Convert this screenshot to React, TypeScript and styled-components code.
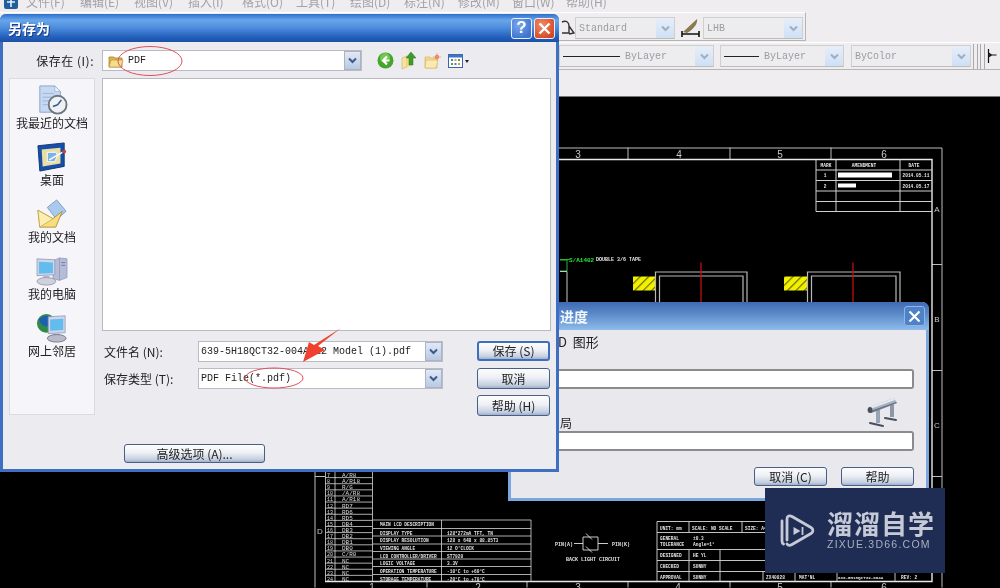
import React from "react";
import styled, { createGlobalStyle } from "styled-components";

const Global = createGlobalStyle`
  html, body { margin: 0; padding: 0; background: #000; overflow: hidden; }
  * { box-sizing: border-box; }
`;

const CJK = `"Noto Sans CJK SC", "Liberation Sans", sans-serif`;
const MONO = `"Liberation Mono", "Noto Sans CJK SC", monospace`;

const Desktop = styled.div`
  position: relative;
  width: 1000px;
  height: 588px;
  overflow: hidden;
  background: #000;
  display: flex;
  flex-direction: column;
  font-family: ${CJK};
  font-size: 12px;
  color: #222;
  filter: blur(0.3px);
`;

/* ---------- CAD chrome ---------- */
const Chrome = styled.div`
  height: 97px;
  flex: none;
  background: #efedf0;
  border-bottom: 1px solid #777;
  overflow: hidden;
`;
const MenuBar = styled.div`
  height: 12px;
  display: flex;
  align-items: center;
  padding-left: 2px;
  overflow: hidden;
`;
const AppIcon = styled.svg`
  width: 18px;
  height: 16px;
  margin-top: -7px;
  margin-right: 6px;
  flex: none;
`;
const MenuItem = styled.span`
  width: 54px;
  flex: none;
  margin-top: -9px;
  color: #a2a1a6;
  font-size: 12px;
  line-height: 15px;
  white-space: nowrap;
`;
const ToolRow = styled.div<{ $left: number; $end?: number; $top: number; $h: number; $pt?: number }>`
  display: flex;
  align-items: center;
  margin-top: ${(p) => p.$top}px;
  height: ${(p) => p.$h}px;
  padding-left: ${(p) => p.$left}px;
  padding-top: ${(p) => p.$pt ?? 0}px;
  width: ${(p) => p.$end ?? 1000}px;
  border-top: 1px solid #fff;
  border-bottom: 1px solid #b5b4b6;
  border-right: ${(p) => (p.$end ? "1px solid #b5b4b6" : "none")};
`;
const ToolCombo = styled.div<{ $w: number; $mr?: number }>`
  width: ${(p) => p.$w}px;
  height: 22px;
  flex: none;
  margin-right: ${(p) => p.$mr ?? 0}px;
  display: flex;
  align-items: center;
  background: #edecee;
  border: 1px solid #d0cfcb;
  border-bottom-color: #bdbcb9;
  padding-left: 3px;
  color: #9c9ba0;
  font-family: ${MONO};
  font-size: 10px;
`;
const ComboValue = styled.span`
  flex: 1;
  min-width: 0;
  display: flex;
  align-items: center;
  white-space: nowrap;
`;
const LineSample = styled.i<{ $w: number }>`
  width: ${(p) => p.$w}px;
  height: 1px;
  background: #222;
  margin-right: 5px;
  flex: none;
`;
const ToolArrow = styled.span`
  width: 18px;
  height: 20px;
  flex: none;
  display: flex;
  align-items: center;
  justify-content: center;
  background: linear-gradient(#e6eefa, #cfe0f4);
`;
const ToolGlyph = styled.svg<{ $w: number }>`
  width: ${(p) => p.$w}px;
  height: 22px;
  flex: none;
`;
const Gripper = styled.div`
  width: 5px;
  height: 25px;
  flex: none;
  margin-left: 2px;
  border-left: 1px solid #a9a8aa;
  border-right: 1px solid #a9a8aa;
`;

/* ---------- drawing area ---------- */
const Canvas = styled.svg`
  display: block;
  flex: 1;
  width: 1000px;
  min-height: 0;
  background: #000;
  filter: blur(0.2px);
`;

/* ---------- windows ---------- */
const SaveWindow = styled.div`
  position: absolute;
  left: 0;
  top: 14px;
  width: 559px;
  height: 458px;
  z-index: 3;
  display: flex;
  flex-direction: column;
  background: #ecebf0;
  border: 3px solid #3f6fc2;
  border-top: none;
  border-radius: 6px 6px 0 0;
`;
const TitleBar = styled.div`
  height: 28px;
  flex: none;
  margin: 0 -3px;
  padding: 0 4px 0 8px;
  border-radius: 6px 6px 0 0;
  display: flex;
  align-items: center;
  justify-content: space-between;
  background: linear-gradient(#2f6fce 0%, #68a6ea 22%, #4c8cdc 50%, #2360bc 82%, #1c50a6 100%);
  color: #fff;
  font-size: 14px;
  font-weight: 700;
  text-shadow: 1px 1px 0 #1b3d80;
`;
const CaptionButtons = styled.div`
  display: flex;
  gap: 2px;
`;
const CaptionButton = styled.span<{ $red?: boolean }>`
  width: 21px;
  height: 21px;
  display: flex;
  align-items: center;
  justify-content: center;
  border: 1px solid #e8eefa;
  border-radius: 3px;
  color: #fff;
  font-family: "Liberation Sans", sans-serif;
  font-size: 17px;
  font-weight: 700;
  text-shadow: none;
  background: ${(p) =>
    p.$red
      ? "radial-gradient(circle at 35% 30%, #f08a68, #d9512c 70%, #c33f1c)"
      : "radial-gradient(circle at 35% 30%, #7ba8ea, #3f74cf 75%)"};
`;
const SaveBody = styled.div`
  flex: 1;
  padding: 8px 5px 0 6px;
  display: flex;
  flex-direction: column;
`;
const TopRow = styled.div`
  height: 21px;
  flex: none;
  display: flex;
  align-items: center;
`;
const TopLabel = styled.label`
  width: 93px;
  flex: none;
  padding-right: 8px;
  text-align: right;
  letter-spacing: 0.5px;
  white-space: nowrap;
`;
const Combo = styled.div<{ $w: number }>`
  width: ${(p) => p.$w}px;
  height: 21px;
  flex: none;
  display: flex;
  align-items: center;
  background: #fff;
  border: 1px solid #b9bcc4;
  padding-left: 2px;
  font-family: ${MONO};
  font-size: 10px;
  color: #222;
  white-space: nowrap;
`;
const ComboText = styled.span`
  flex: 1;
  min-width: 0;
  display: flex;
  align-items: center;
  gap: 4px;
`;
const ArrowButton = styled.span`
  width: 17px;
  height: 19px;
  flex: none;
  display: flex;
  align-items: center;
  justify-content: center;
  border: 1px solid #a9b4c8;
  background: linear-gradient(#e2e9f6, #b9c9e2);
`;
const NavIcons = styled.div`
  display: flex;
  align-items: center;
  gap: 7px;
  margin-left: 15px;
`;
const MainGrid = styled.div`
  margin-top: 7px;
  display: grid;
  grid-template-columns: 86px 1fr;
  column-gap: 7px;
`;
const PlacesBar = styled.div`
  height: 337px;
  padding-top: 6px;
  background: #f6f5f9;
  border: 1px solid #dcdbe0;
  display: flex;
  flex-direction: column;
`;
const Place = styled.div`
  height: 57px;
  flex: none;
  display: flex;
  flex-direction: column;
  align-items: center;
  white-space: nowrap;
  line-height: 16px;
  svg { flex: none; width: 34px; height: 30px; }
`;
const FileColumn = styled.div`
  display: flex;
  flex-direction: column;
`;
const FileList = styled.div`
  height: 253px;
  background: #fff;
  border: 1px solid #b9bac0;
`;
const FormGrid = styled.div`
  margin-top: 10px;
  display: grid;
  grid-template-columns: 96px 245px 73px;
  grid-template-rows: 21px 21px 21px;
  column-gap: 0;
  row-gap: 6px;
  align-items: start;
`;
const FormLabel = styled.label`
  padding-left: 2px;
  line-height: 21px;
  white-space: nowrap;
`;
const FormButtonCell = styled.div`
  margin-left: 34px;
  width: 73px;
`;
const XpButton = styled.button<{ $w?: number; $default?: boolean; $h?: number }>`
  width: ${(p) => p.$w ?? 73}px;
  height: ${(p) => p.$h ?? 20}px;
  padding: 0;
  display: block;
  border: ${(p) => (p.$default ? "2px solid #3f6fb8" : "1px solid #4a5f86")};
  border-radius: 3px;
  background: linear-gradient(#fdfdfe 0%, #eef0f5 45%, #c4cfe0 85%, #9fb0cb 100%);
  color: #222;
  font-family: ${CJK};
  font-size: 12px;
  line-height: 1;
  white-space: nowrap;
`;
const AdvancedRow = styled.div`
  margin-top: 28px;
  margin-left: 115px;
`;

const ProgressWindow = styled.div`
  position: absolute;
  left: 508px;
  top: 302px;
  width: 421px;
  height: 199px;
  z-index: 2;
  background: #e9e8ed;
  border: 3px solid #7ba6de;
  border-top: none;
  border-radius: 7px 7px 0 0;
  display: flex;
  flex-direction: column;
`;
const ProgressTitle = styled.div`
  height: 28px;
  flex: none;
  margin: 0 -3px;
  padding: 0 4px 0 52px;
  border-radius: 7px 7px 0 0;
  display: flex;
  align-items: center;
  justify-content: space-between;
  background: linear-gradient(#3f6ab2 0%, #5d8ccb 45%, #8dbbea 100%);
  color: #f2f7ff;
  font-size: 14px;
  font-weight: 700;
`;
const CloseBox = styled.span`
  width: 21px;
  height: 20px;
  display: flex;
  align-items: center;
  justify-content: center;
  border: 1px solid #8fb4e6;
  border-radius: 3px;
  background: #4f81c9;
`;
const ProgressBody = styled.div`
  flex: 1;
  padding: 3px 12px 0 47px;
  display: flex;
  flex-direction: column;
`;
const ProgressCaption = styled.div`
  height: 17px;
  line-height: 17px;
  font-size: 13px;
  white-space: nowrap;
`;
const ProgressBar = styled.div<{ $top: number }>`
  height: 20px;
  margin-top: ${(p) => p.$top}px;
  flex: none;
  background: #fff;
  border: 2px solid #8b8b8e;
  border-left: none;
  border-radius: 0 3px 3px 0;
`;
const PlotterRow = styled.div`
  height: 34px;
  margin-top: 7px;
  display: flex;
  align-items: flex-end;
  justify-content: space-between;
`;
const ProgressLabel = styled.span`
  font-size: 12px;
  line-height: 16px;
  margin-left: 2px;
  margin-bottom: -1px;
`;
const PlotterIcon = styled.svg`
  width: 34px;
  height: 32px;
  margin-right: 15px;
  margin-bottom: 2px;
  flex: none;
`;
const ProgressActions = styled.div`
  margin-top: 16px;
  display: flex;
  justify-content: flex-end;
  gap: 14px;
`;

/* ---------- overlays ---------- */
const Annotation = styled.svg`
  position: absolute;
  inset: 0;
  width: 1000px;
  height: 588px;
  z-index: 4;
  pointer-events: none;
`;
const Watermark = styled.div`
  position: absolute;
  left: 765px;
  top: 488px;
  width: 180px;
  height: 85px;
  z-index: 5;
  background: #1f2d55;
  display: flex;
  align-items: center;
  padding-left: 14px;
  color: #c6cad6;
`;
const WatermarkLogo = styled.svg`
  width: 38px;
  height: 38px;
  flex: none;
  margin-right: 10px;
`;
const WatermarkText = styled.div`
  display: flex;
  flex-direction: column;
  margin-top: -2px;
`;
const WatermarkName = styled.span`
  font-size: 26px;
  font-weight: 700;
  line-height: 30px;
  letter-spacing: 1px;
  white-space: nowrap;
`;
const WatermarkSite = styled.span`
  font-family: "Liberation Sans", sans-serif;
  font-size: 10.5px;
  line-height: 13px;
  letter-spacing: 1.25px;
  white-space: nowrap;
  color: #a9aebf;
`;
const FolderGlyph = styled.svg`
  width: 16px;
  height: 14px;
  margin-left: 3px;
  flex: none;
`;

/* ---------- icons ---------- */
const Chevron = ({ c = "#3b5a8c" }: { c?: string }) => (
  <svg width="11" height="9" viewBox="0 0 11 9">
    <path d="M2 2.500 5.500 6 9 2.500" fill="none" stroke={c} strokeWidth="2" />
  </svg>
);
const FolderIcon = () => (
  <FolderGlyph viewBox="0 0 16 14">
    <path d="M1 3h5l1 1h7v9H1z" fill="#e2b64e" stroke="#9c7420" strokeWidth=".7" />
    <path d="M3 6h12l-2 7H1z" fill="#f7dd8c" stroke="#b08a30" strokeWidth=".6" />
  </FolderGlyph>
);
const BackIcon = () => (
  <svg width="17" height="17" viewBox="0 0 17 17">
    <circle cx="8.500" cy="8.500" r="8" fill="#45a52c" />
    <circle cx="8" cy="6" r="5" fill="#8ad868" opacity=".65" />
    <path d="M10 4.500 6 8.500l4 4M6 8.500h6.500" fill="none" stroke="#fff" strokeWidth="2.200" />
  </svg>
);
const UpIcon = () => (
  <svg width="16" height="19" viewBox="0 0 16 19">
    <path d="M1 7l5-2v11l-5 2z" fill="#f7e2a0" stroke="#d0b060" strokeWidth=".6" />
    <path d="M6 5h4v10l-4 1z" fill="#f4d880" />
    <path d="M10 1l5 6h-3v7H8V7H5z" fill="#3f9a2c" stroke="#2a7a1c" strokeWidth=".5" />
  </svg>
);
const NewFolderIcon = () => (
  <svg width="17" height="16" viewBox="0 0 17 16">
    <path d="M1 4h5l1 1h6v10H1z" fill="#f4d98c" stroke="#d0ac58" strokeWidth=".6" />
    <path d="M2 7h12l-2 8H1z" fill="#fae9b0" stroke="#d0ac58" strokeWidth=".5" />
    <circle cx="13" cy="4" r="2.200" fill="#ec8050" />
    <path d="M13 0v8M9 4h8" stroke="#ec9a70" strokeWidth=".8" />
  </svg>
);
const ViewsIcon = () => (
  <svg width="22" height="16" viewBox="0 0 22 16">
    <rect x=".5" y="1.500" width="14" height="13" fill="#fff" stroke="#3c64a8" />
    <rect x=".5" y="1.500" width="14" height="3" fill="#3c74c8" />
    <g fill="#4a80c8">
      <rect x="3" y="6" width="2" height="2" />
      <rect x="6.500" y="6" width="2" height="2" fill="#d8a030" />
      <rect x="10" y="6" width="2" height="2" fill="#58a040" />
      <rect x="3" y="10" width="2" height="2" fill="#58a040" />
      <rect x="6.500" y="10" width="2" height="2" />
      <rect x="10" y="10" width="2" height="2" fill="#d8a030" />
    </g>
    <path d="M17 7h4l-2 3z" fill="#222" />
  </svg>
);
const RecentIcon = () => (
  <svg viewBox="0 0 34 32">
    <path d="M4 1h16l6 6v22H4z" fill="#c6d8f2" stroke="#8aa2cc" />
    <path d="M20 1v6h6z" fill="#eef3fb" stroke="#8aa2cc" strokeWidth=".6" />
    <path d="M7 9h12M7 13h10M7 17h8M7 21h7" stroke="#9ab3d8" />
    <circle cx="23" cy="21" r="9.500" fill="#eef1f5" stroke="#70767e" strokeWidth="2" />
    <path d="M23 21l4-5M23 21l-5 2" stroke="#3c5a88" strokeWidth="1.600" />
  </svg>
);
const DesktopIcon = () => (
  <svg viewBox="0 0 34 32">
    <path d="M2 4 30 1v25L4 31z" fill="#174fa8" stroke="#0f3578" />
    <path d="M6 8 26 6v17L7 26z" fill="#e9dfa2" />
    <path d="M12 11h9l2 3-3 7h-8z" fill="#7fb0e6" stroke="#fff" />
    <path d="M14 19 28 11" stroke="#fff" strokeWidth="1.600" />
    <circle cx="30" cy="10" r="2" fill="#d0402c" />
  </svg>
);
const DocsIcon = () => (
  <svg viewBox="0 0 34 32">
    <path d="M12 9 22 1l10 12-10 9z" fill="#a9c9ee" stroke="#7d9cc6" />
    <path d="M2 12l16 9 10-8-7 17H4z" fill="#f6dd7e" stroke="#b49336" />
    <path d="M2 12l2 18 14-9z" fill="#fbeeb0" stroke="#b49336" strokeWidth=".6" />
  </svg>
);
const ComputerIcon = () => (
  <svg viewBox="0 0 34 32">
    <path d="M18 5l7-3 8 1v20l-8 3-7-2z" fill="#b4bcd8" stroke="#8a90b0" strokeWidth=".7" />
    <path d="M25 2v24" stroke="#8a90b0" strokeWidth=".7" />
    <path d="M27 7h4M27 10h4" stroke="#737a9c" />
    <path d="M1 3l19 1v16L1 21z" fill="#cdd6ea" stroke="#8d96b4" strokeWidth=".8" />
    <path d="M3 6l15 1v11L3 19z" fill="#62bcee" />
    <path d="M8 21h6l1 3H7z" fill="#b6b4d2" />
    <ellipse cx="11" cy="27" rx="10" ry="4" fill="#cfd1dc" stroke="#9a9cae" />
  </svg>
);
const NetworkIcon = () => (
  <svg viewBox="0 0 34 32">
    <circle cx="11" cy="11" r="10" fill="#2f8a4a" />
    <path d="M3 7c4-5 10-5 14-2-2 3-1 7-5 9-4 1-7-2-9-7z" fill="#1e5fb0" />
    <path d="M13 4l18-1v18l-18 1z" fill="#cdd6ea" stroke="#8d96b4" strokeWidth=".8" />
    <path d="M15 7l14-1v12l-14 1z" fill="#62bcee" />
    <path d="M19 22h6l1 3h-8z" fill="#b6b4d2" />
    <ellipse cx="22" cy="27" rx="10" ry="4" fill="#b9bbc8" stroke="#77798c" />
  </svg>
);

const places = [
  { label: "我最近的文档", icon: <RecentIcon /> },
  { label: "桌面", icon: <DesktopIcon /> },
  { label: "我的文档", icon: <DocsIcon /> },
  { label: "我的电脑", icon: <ComputerIcon /> },
  { label: "网上邻居", icon: <NetworkIcon /> },
];
const menus = ["文件(F)", "编辑(E)", "视图(V)", "插入(I)", "格式(O)", "工具(T)", "绘图(D)", "标注(N)", "修改(M)", "窗口(W)", "帮助(H)"];

/* ---------- CAD drawing (coordinates are page coordinates) ---------- */
const pinRows = ["A/R8", "A/R18", "R/G", "/A/R8", "A/R18", "RD7", "RD6", "RD5", "DB4", "DB3", "DB2", "DB1", "DB0", "C/R0", "NC", "NC", "NC", "NC"];
const lcdRows = [
  ["MAIN LCD DESCRIPTION", ""],
  ["DISPLAY TYPE", "128*272mA TFT, TN"],
  ["DISPLAY RESOLUTION", "128 x 64B x 88.85T3"],
  ["VIEWING ANGLE", "12 O'CLOCK"],
  ["LCD CONTROLLER/DRIVER", "ST7920"],
  ["LOGIC VOLTAGE", "3.3V"],
  ["OPERATION TEMPERATURE", "-10°C to +60°C"],
  ["STORAGE TEMPERATURE", "-20°C to +70°C"],
];
const lcdY = [520.5, 529, 536.5, 544.5, 552, 559.5, 567, 575, 582];

const Drawing = () => (
  <Canvas viewBox="0 98 1000 490">
    <defs>
      <pattern id="hatch" width="6" height="6" patternUnits="userSpaceOnUse" patternTransform="rotate(-45)">
        <rect width="6" height="6" fill="#f2f200" />
        <rect width="6" height="1.200" fill="#6e6a00" />
      </pattern>
    </defs>
    <g fill="none" stroke="#bdbdbd" strokeWidth="1">
      <path d="M550 148.500H942V588" />
      <path d="M628 148v12M730 148v12M831 148v12M932 265h10M932 371h10M932 477h10" />
      <path d="M315 472V588M315 477h10M427 582v6M527 582v6M628 582v6M730 582v6M831 582v6" />
    </g>
    <path d="M550 160H932V582H325" fill="none" stroke="#e8e8e8" strokeWidth="1.400" />
    <g fill="#c8c8c8" fontFamily='"Liberation Sans", sans-serif' fontSize="10" textAnchor="middle">
      <text x="578" y="158">3</text>
      <text x="679" y="158">4</text>
      <text x="780" y="158">5</text>
      <text x="884" y="158">6</text>
      <text x="937" y="212" fontSize="8">A</text>
      <text x="937" y="322" fontSize="8">B</text>
      <text x="937" y="428" fontSize="8">C</text>
      <text x="320" y="534" fontSize="8">D</text>
      <text x="372" y="591">1</text>
      <text x="478" y="591">2</text>
      <text x="578" y="591">3</text>
      <text x="678" y="591">4</text>
      <text x="780" y="591">5</text>
      <text x="884" y="591">6</text>
    </g>

    {/* revision table */}
    <path d="M816 160V212H932M816 170.500H932M816 181H932M816 191.500H932M816 202H932M836 160V212M900 160V212" fill="none" stroke="#d0d0d0" />
    <rect x="838" y="173" width="54" height="5" fill="#fff" />
    <rect x="838" y="184" width="18" height="4" fill="#fff" />
    <g fill="#e6e6e6" fontFamily={MONO} fontSize="4.500" fontWeight="700" textAnchor="middle">
      <text x="826" y="167">MARK</text>
      <text x="864" y="167">AMENDMENT</text>
      <text x="914" y="167">DATE</text>
      <text x="825" y="177">1</text>
      <text x="825" y="188">2</text>
      <text x="916" y="177">2014.05.11</text>
      <text x="916" y="188">2014.05.17</text>
    </g>

    {/* frames */}
    <text x="569" y="262" fontFamily={MONO} fontSize="6" fontWeight="700" fill="#22e83a">S/A1402</text>
    <text x="596" y="261" fontFamily={MONO} fontSize="5" fontWeight="700" fill="#e6e6e6">DOUBLE 3/6 TAPE</text>
    <path d="M560 260h9M560 260.500h7v11h-7" fill="none" stroke="#22b83a" />
    <path d="M560 272h7v40" fill="none" stroke="#c8c8c8" />
    <rect x="633" y="277" width="23" height="14" fill="url(#hatch)" />
    <rect x="784" y="277" width="23" height="14" fill="url(#hatch)" />
    <g fill="none" stroke="#b8b8b8" strokeWidth="1.200">
      <path d="M655.500 312V272.500H747V312M659.500 312V276.500H743V312" />
      <path d="M807.500 312V272.500H900V312M811.500 312V276.500H896V312" />
    </g>
    <path d="M701 263V312M853 263V312" stroke="#c01010" strokeWidth="1.300" />

    {/* pin table */}
    <g fill="none" stroke="#d8d8d8" strokeWidth=".8">
      <path d="M325.500 472H372.500V582M325.500 472V582M335 472V582" />
      {pinRows.map((_, i) => (
        <path key={i} d={`M325.500 ${472 + i * 6.11}H372.500`} />
      ))}
    </g>
    <g fill="#dcdcdc" fontFamily={MONO} fontSize="6">
      {pinRows.map((r, i) => (
        <React.Fragment key={r + i}>
          <text x="327" y={477.5 + i * 6.11} fontSize="5">{i + 7}</text>
          <text x="342" y={477.5 + i * 6.11}>{r}</text>
        </React.Fragment>
      ))}
    </g>

    {/* LCD table */}
    <g fill="none" stroke="#d8d8d8" strokeWidth=".8">
      {lcdY.map((y) => (
        <path key={y} d={`M373 ${y}H531`} />
      ))}
      <path d="M531 520.500V582M441.500 520.500V582" />
    </g>
    <g fill="#e2e2e2" fontFamily={MONO} fontSize="4.500" fontWeight="700">
      {lcdRows.map((r, i) => (
        <React.Fragment key={r[0]}>
          <text x="380" y={lcdY[i] + 6}>{r[0]}</text>
          <text x="447" y={lcdY[i] + 6}>{r[1]}</text>
        </React.Fragment>
      ))}
    </g>

    {/* back light circuit */}
    <g fill="none" stroke="#e0e0e0" strokeWidth=".9">
      <path d="M574 544h9M583 537.500h15v13h-15zM598 544h10M586 534l6 6M586 547l6 6" />
    </g>
    <g fill="#e2e2e2" fontFamily={MONO} fontSize="5" fontWeight="700">
      <text x="555" y="546">PIN(A)</text>
      <text x="612" y="546">PIN(K)</text>
      <text x="566" y="561">BACK LIGHT CIRCUIT</text>
    </g>

    {/* title block */}
    <g fill="none" stroke="#d8d8d8" strokeWidth=".9">
      <path d="M657 522H780M657 533H780M657 550H780M657 561H780M657 572H932M657 522V582" />
      <path d="M689 550V582M720 550V582M689 522V533M742 522V533" />
      <path d="M763 572V582M795 572V582M837 572V582M895 572V582" />
    </g>
    <g fill="#e4e4e4" fontFamily={MONO} fontSize="4.500" fontWeight="700">
      <text x="660" y="530">UNIT: mm</text>
      <text x="692" y="530">SCALE: NO SCALE</text>
      <text x="745" y="530">SIZE: A4</text>
      <text x="660" y="540">GENERAL</text>
      <text x="660" y="546">TOLERANCE</text>
      <text x="693" y="540">±0.3</text>
      <text x="693" y="546">Angle=1°</text>
      <text x="660" y="557">DESIGNED</text>
      <text x="693" y="557">HE YL</text>
      <text x="660" y="568">CHECKED</text>
      <text x="693" y="568">SUNNY</text>
      <text x="660" y="579">APPROVAL</text>
      <text x="693" y="579">SUNNY</text>
      <text x="766" y="579">ZX40828</text>
      <text x="799" y="579">MAT'NL</text>
      <text x="838" y="579" fontSize="4.200">639-5H18QCT32-004A</text>
      <text x="901" y="579">REV: 2</text>
    </g>
  </Canvas>
);

export default function App() {
  return (
    <>
      <Global />
      <Desktop>
        <Chrome>
          <MenuBar>
            <AppIcon viewBox="0 0 18 16">
              <rect x="2" y="0" width="14" height="14" rx="2" fill="#1f5f9c" />
              <path d="M6 3h7M9 3v9M5 7h8" stroke="#e8f2fa" strokeWidth="1.600" />
            </AppIcon>
            {menus.map((m) => (
              <MenuItem key={m}>{m}</MenuItem>
            ))}
          </MenuBar>
          <ToolRow $left={561} $end={806} $top={0} $h={29} $pt={3}>
            <ToolGlyph $w={14} viewBox="0 0 14 22">
              <path d="M1 5c4-2 7 0 7 4v7H1M8 9l5 7-5 1" fill="none" stroke="#333" strokeWidth="1.400" />
            </ToolGlyph>
            <ToolCombo $w={100}>
              <ComboValue>Standard</ComboValue>
              <ToolArrow><Chevron c="#9ab0c8" /></ToolArrow>
            </ToolCombo>
            <ToolGlyph $w={28} viewBox="0 0 28 22">
              <path d="M8 15 22 2c1 4-3 10-10 14z" fill="#8a7a50" />
              <path d="M7 17h17M7 14v6M24 14v6" stroke="#111" strokeWidth="1.600" fill="none" />
            </ToolGlyph>
            <ToolCombo $w={100}>
              <ComboValue>LHB</ComboValue>
              <ToolArrow><Chevron c="#9ab0c8" /></ToolArrow>
            </ToolCombo>
          </ToolRow>
          <ToolRow $left={559} $top={1} $h={28}>
            <ToolCombo $w={155} $mr={6}>
              <ComboValue><LineSample $w={57} />ByLayer</ComboValue>
              <ToolArrow><Chevron c="#9ab0c8" /></ToolArrow>
            </ToolCombo>
            <ToolCombo $w={124} $mr={7}>
              <ComboValue><LineSample $w={35} />ByLayer</ComboValue>
              <ToolArrow><Chevron c="#9ab0c8" /></ToolArrow>
            </ToolCombo>
            <ToolCombo $w={120}>
              <ComboValue>ByColor</ComboValue>
              <ToolArrow><Chevron c="#9ab0c8" /></ToolArrow>
            </ToolCombo>
            <Gripper />
            <Gripper />
            <ToolGlyph $w={12} viewBox="0 0 12 22">
              <path d="M3.500 4v14M3.500 10h8M3.500 8l3 2-3 2" fill="none" stroke="#111" strokeWidth="1.200" />
            </ToolGlyph>
          </ToolRow>
        </Chrome>
        <Drawing />

        <ProgressWindow>
          <ProgressTitle>
            <span>进度</span>
            <CloseBox>
              <svg width="13" height="13" viewBox="0 0 13 13">
                <path d="M1.500 1.500l10 10M11.500 1.500l-10 10" stroke="#fff" strokeWidth="2.200" />
              </svg>
            </CloseBox>
          </ProgressTitle>
          <ProgressBody>
            <ProgressCaption>D&nbsp;&nbsp;图形</ProgressCaption>
            <ProgressBar $top={19} />
            <PlotterRow>
              <ProgressLabel>局</ProgressLabel>
              <PlotterIcon viewBox="0 0 34 32">
                <path d="M12 14v13M14 14v13" stroke="#98a4b4" strokeWidth="2" />
                <path d="M26 7v14M28 7v14" stroke="#8c98a8" strokeWidth="2" />
                <path d="M4 11 29 2l3 5-26 10z" fill="#a7b3c4" />
                <path d="M4 11 29 2l1 2L5 13z" fill="#e4e9f0" />
                <path d="M5 15 31 6l1 1L6 17z" fill="#6c7686" />
                <ellipse cx="5" cy="14" rx="2.400" ry="3" fill="#47505e" />
                <path d="M5 27l13 3M20 22l11 2" stroke="#47505e" strokeWidth="2" strokeLinecap="round" />
              </PlotterIcon>
            </PlotterRow>
            <ProgressBar $top={1} />
            <ProgressActions>
              <XpButton $h={19}>取消 (C)</XpButton>
              <XpButton $h={19}>帮助</XpButton>
            </ProgressActions>
          </ProgressBody>
        </ProgressWindow>

        <SaveWindow>
          <TitleBar>
            <span>另存为</span>
            <CaptionButtons>
              <CaptionButton>?</CaptionButton>
              <CaptionButton $red>
                <svg width="13" height="13" viewBox="0 0 13 13">
                  <path d="M1.500 1.500l10 10M11.500 1.500l-10 10" stroke="#fff" strokeWidth="2.400" />
                </svg>
              </CaptionButton>
            </CaptionButtons>
          </TitleBar>
          <SaveBody>
            <TopRow>
              <TopLabel>保存在 (I):</TopLabel>
              <Combo $w={260}>
                <ComboText><FolderIcon />PDF</ComboText>
                <ArrowButton><Chevron /></ArrowButton>
              </Combo>
              <NavIcons>
                <BackIcon />
                <UpIcon />
                <NewFolderIcon />
                <ViewsIcon />
              </NavIcons>
            </TopRow>
            <MainGrid>
              <PlacesBar>
                {places.map((p) => (
                  <Place key={p.label}>
                    {p.icon}
                    <span>{p.label}</span>
                  </Place>
                ))}
              </PlacesBar>
              <FileColumn>
                <FileList />
                <FormGrid>
                  <FormLabel>文件名 (N):</FormLabel>
                  <Combo $w={245}>
                    <ComboText>639-5H18QCT32-004A112 Model (1).pdf</ComboText>
                    <ArrowButton><Chevron /></ArrowButton>
                  </Combo>
                  <FormButtonCell><XpButton $default>保存 (S)</XpButton></FormButtonCell>
                  <FormLabel>保存类型 (T):</FormLabel>
                  <Combo $w={245}>
                    <ComboText>PDF File(*.pdf)</ComboText>
                    <ArrowButton><Chevron /></ArrowButton>
                  </Combo>
                  <FormButtonCell><XpButton $h={21}>取消</XpButton></FormButtonCell>
                  <span />
                  <span />
                  <FormButtonCell><XpButton $h={21}>帮助 (H)</XpButton></FormButtonCell>
                </FormGrid>
              </FileColumn>
            </MainGrid>
            <AdvancedRow>
              <XpButton $w={141} $h={19}>高级选项 (A)...</XpButton>
            </AdvancedRow>
          </SaveBody>
        </SaveWindow>

        <Annotation viewBox="0 0 1000 588">
          <ellipse cx="150" cy="61" rx="32" ry="14.500" fill="none" stroke="#e0505a" />
          <ellipse cx="274" cy="378" rx="29" ry="10" fill="none" stroke="#e0505a" />
          <path d="M341 328 318 346 325 350 303 362 309 342 314 345z" fill="#f0402e" />
        </Annotation>

        <Watermark>
          <WatermarkLogo viewBox="0 0 38 38">
            <path d="M3 9v20c0 1.500.5 2.500 1.500 3" fill="none" stroke="#c6cad6" strokeWidth="2.800" strokeLinecap="round" />
            <path d="M8 28V7c0-3 2.500-4 5-2.500l19 11c2.500 1.500 2.500 4.500 0 6l-19 11c-2 1.200-4 1-5-.5" fill="none" stroke="#c6cad6" strokeWidth="2.800" strokeLinecap="round" />
            <path d="M14.500 15l7 4-7 4z" fill="#c6cad6" />
            <path d="M23.500 15v8" stroke="#c6cad6" strokeWidth="1.800" />
          </WatermarkLogo>
          <WatermarkText>
            <WatermarkName>溜溜自学</WatermarkName>
            <WatermarkSite>ZIXUE.3D66.COM</WatermarkSite>
          </WatermarkText>
        </Watermark>
      </Desktop>
    </>
  );
}
